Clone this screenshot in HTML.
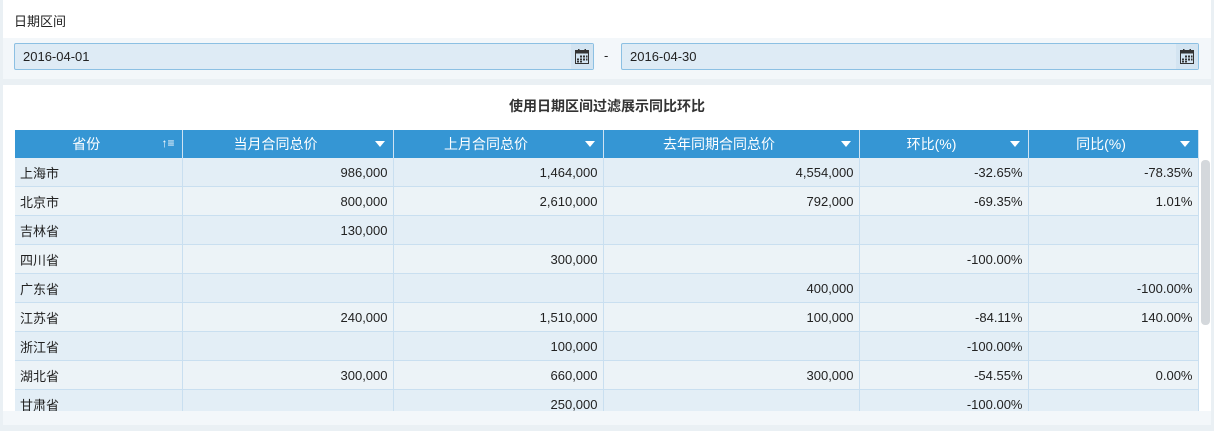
<!DOCTYPE html>
<html><head><meta charset="utf-8"><style>
body{margin:0;width:1214px;height:431px;background:#eaf0f4;font-family:"Liberation Sans","Noto Sans CJK SC",sans-serif;font-size:13px;color:#222;position:relative;overflow:hidden}
.p1{position:absolute;left:3px;top:0;width:1208px;height:38px;background:#fff}
.p1b{position:absolute;left:3px;top:38px;width:1208px;height:41px;background:#f3f7fa}
.lbl{position:absolute;left:14px;top:11px;font-size:13px}
.inp{position:absolute;top:43px;height:27px;background:#deebf5;border:1px solid #8cc0e3;border-radius:2px;box-sizing:border-box;line-height:25px;padding-left:8px;font-size:13px}
.cal{position:absolute;right:0;top:0;width:22px;height:25px;background:#d3e4f1}
.cal svg{position:absolute;left:4px;top:5px}
.p2{position:absolute;left:3px;top:85px;width:1208px;height:340px;background:#fff}
.p2b{position:absolute;left:3px;top:411px;width:1208px;height:14px;background:#f3f7fa}
.title{position:absolute;left:0;width:1214px;top:96px;text-align:center;font-weight:bold;font-size:14px;color:#333}
table{position:absolute;left:15px;top:130px;border-collapse:collapse;table-layout:fixed}
th{background:#3596d4;color:#fff;font-weight:normal;height:28px;border-right:1px solid #cfe3f2;position:relative;font-size:14px;padding:0 24px 0 0}
th .a{position:absolute;right:8px;top:11px;width:0;height:0;border-left:5px solid transparent;border-right:5px solid transparent;border-top:6px solid #fff}
td{height:28px;border-right:1px solid #c9dff0;border-bottom:1px solid #c9dff0;padding:0 5px;text-align:right;font-size:13px;color:#222}
td:first-child{text-align:left}
tr.o td{background:#e3eef6}
tr.e td{background:#ecf3f7}
.wrap{position:absolute;left:0;top:0;width:1214px;height:411px;overflow:hidden}
.sb{position:absolute;left:1201px;top:160px;width:9px;height:165px;background:#d4d8dc;border-radius:4px}
</style></head><body>
<div class="p1"></div><div class="p1b"></div>
<div class="lbl">日期区间</div>
<div class="inp" style="left:14px;width:580px">2016-04-01<div class="cal"><svg width="14" height="15" viewBox="0 0 14 15"><rect x="0.5" y="1.5" width="13" height="13" fill="none" stroke="#333"/><rect x="0.5" y="1.5" width="13" height="3" fill="#333"/><rect x="3" y="0" width="1.5" height="3" fill="#333"/><rect x="9.5" y="0" width="1.5" height="3" fill="#333"/><g fill="#333"><rect x="5" y="6.5" width="2" height="2"/><rect x="8" y="6.5" width="2" height="2"/><rect x="11" y="6.5" width="1.5" height="2"/><rect x="2" y="9.5" width="2" height="2"/><rect x="5" y="9.5" width="2" height="2"/><rect x="8" y="9.5" width="2" height="2"/><rect x="11" y="9.5" width="1.5" height="2"/><rect x="2" y="12" width="2" height="1.5"/><rect x="5" y="12" width="2" height="1.5"/></g></svg></div></div>
<div style="position:absolute;left:604px;top:48px">-</div>
<div class="inp" style="left:621px;width:578px">2016-04-30<div class="cal"><svg width="14" height="15" viewBox="0 0 14 15"><rect x="0.5" y="1.5" width="13" height="13" fill="none" stroke="#333"/><rect x="0.5" y="1.5" width="13" height="3" fill="#333"/><rect x="3" y="0" width="1.5" height="3" fill="#333"/><rect x="9.5" y="0" width="1.5" height="3" fill="#333"/><g fill="#333"><rect x="5" y="6.5" width="2" height="2"/><rect x="8" y="6.5" width="2" height="2"/><rect x="11" y="6.5" width="1.5" height="2"/><rect x="2" y="9.5" width="2" height="2"/><rect x="5" y="9.5" width="2" height="2"/><rect x="8" y="9.5" width="2" height="2"/><rect x="11" y="9.5" width="1.5" height="2"/><rect x="2" y="12" width="2" height="1.5"/><rect x="5" y="12" width="2" height="1.5"/></g></svg></div></div>
<div class="p2"></div><div class="p2b"></div>
<div class="title">使用日期区间过滤展示同比环比</div>
<div class="wrap">
<table>
<colgroup><col style="width:167px"><col style="width:211px"><col style="width:210px"><col style="width:256px"><col style="width:169px"><col style="width:170px"></colgroup>
<tr><th>省份<span style="position:absolute;right:7px;top:6px;font-size:12px;font-weight:bold">↑≡</span></th><th>当月合同总价<span class="a"></span></th><th>上月合同总价<span class="a"></span></th><th>去年同期合同总价<span class="a"></span></th><th>环比(%)<span class="a"></span></th><th>同比(%)<span class="a"></span></th></tr>
<tr class="o"><td>上海市</td><td>986,000</td><td>1,464,000</td><td>4,554,000</td><td>-32.65%</td><td>-78.35%</td></tr>
<tr class="e"><td>北京市</td><td>800,000</td><td>2,610,000</td><td>792,000</td><td>-69.35%</td><td>1.01%</td></tr>
<tr class="o"><td>吉林省</td><td>130,000</td><td></td><td></td><td></td><td></td></tr>
<tr class="e"><td>四川省</td><td></td><td>300,000</td><td></td><td>-100.00%</td><td></td></tr>
<tr class="o"><td>广东省</td><td></td><td></td><td>400,000</td><td></td><td>-100.00%</td></tr>
<tr class="e"><td>江苏省</td><td>240,000</td><td>1,510,000</td><td>100,000</td><td>-84.11%</td><td>140.00%</td></tr>
<tr class="o"><td>浙江省</td><td></td><td>100,000</td><td></td><td>-100.00%</td><td></td></tr>
<tr class="e"><td>湖北省</td><td>300,000</td><td>660,000</td><td>300,000</td><td>-54.55%</td><td>0.00%</td></tr>
<tr class="o"><td>甘肃省</td><td></td><td>250,000</td><td></td><td>-100.00%</td><td></td></tr>
</table>
</div>
<div class="sb"></div>
</body></html>
